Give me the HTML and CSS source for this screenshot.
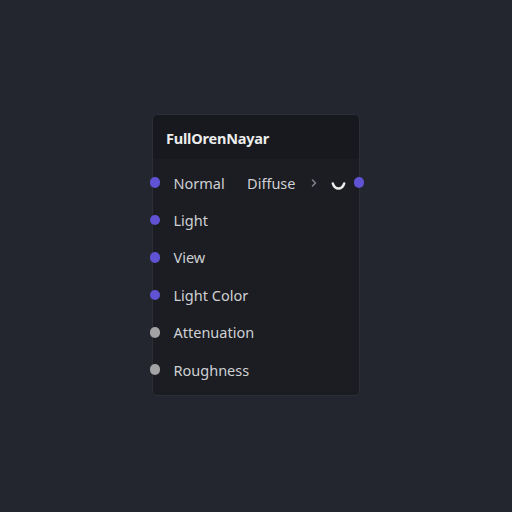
FILE: index.html
```html
<!DOCTYPE html>
<html>
<head>
<meta charset="utf-8">
<link rel="stylesheet" href="styles.css">
</head>
<body>
<div class="canvas">
  <div class="node">
    <div class="node-header">FullOrenNayar</div>
    <div class="node-body">
      <div class="row">
        <div class="port in"><span class="dot purple"></span><span class="label">Normal</span></div>
        <div class="port out">
          <span class="label">Diffuse</span>
          <svg class="chev-right" width="6" height="10" viewBox="0 0 6 10"><path d="M1.5 2 L4.5 5 L1.5 8" fill="none" stroke="#7d808a" stroke-width="1.6" stroke-linecap="round" stroke-linejoin="round"/></svg>
          <svg class="chev-down" width="15" height="10" viewBox="0 0 15 10"><path d="M1.8 2.5 Q3.5 7.5 7.5 7.5 Q11.5 7.5 13.2 2.5" fill="none" stroke="#ececec" stroke-width="2.4" stroke-linecap="round"/></svg>
          <span class="dot purple"></span>
        </div>
      </div>
      <div class="row"><div class="port in"><span class="dot purple"></span><span class="label">Light</span></div></div>
      <div class="row"><div class="port in"><span class="dot purple"></span><span class="label">View</span></div></div>
      <div class="row"><div class="port in"><span class="dot purple"></span><span class="label">Light Color</span></div></div>
      <div class="row"><div class="port in"><span class="dot grey"></span><span class="label">Attenuation</span></div></div>
      <div class="row"><div class="port in"><span class="dot grey"></span><span class="label">Roughness</span></div></div>
    </div>
  </div>
</div>
</body>
</html>
```

FILE: styles.css
```css
html, body {
  margin: 0;
  padding: 0;
  background: #23262e;
  width: 512px;
  height: 512px;
  overflow: hidden;
}
.canvas {
  position: relative;
  width: 512px;
  height: 512px;
  font-family: "Noto Sans", "Open Sans", sans-serif;
}
.node {
  position: absolute;
  left: 152px;
  top: 114px;
  width: 208px;
  height: 282px;
  background: #1b1d23;
  border: 1px solid #2b2e36;
  border-radius: 5px;
  box-sizing: border-box;
}
.node-header {
  height: 44px;
  box-sizing: border-box;
  padding: 13px 0 0 13px;
  background: #17191e;
  border-radius: 5px 5px 0 0;
  color: #ececec;
  font-weight: 700;
  font-size: 14.5px;
  line-height: 20px;
  letter-spacing: -0.2px;
}
.node-body {
  padding-top: 5px;
  display: flex;
  flex-direction: column;
}
.row {
  height: 37.4px;
  display: flex;
  align-items: center;
  justify-content: space-between;
}
.port {
  display: flex;
  align-items: center;
}
.port.in {
  margin-left: -3.5px;
}
.port.out {
  margin-right: -5px;
}
.dot {
  width: 10.5px;
  height: 10.5px;
  border-radius: 50%;
  flex: none;
}
.dot.purple { background: #5f52d3; }
.dot.grey { background: #a3a3a5; }
.label {
  color: #cfd0d3;
  font-size: 14.5px;
  line-height: 20px;
}
.port.in .label {
  margin-left: 13.5px;
}
.port.out .label {
  margin-right: 15px;
}
.chev-right {
  margin-right: 14px;
}
.chev-down {
  margin-right: 8px;
  margin-top: 6px;
}
```
